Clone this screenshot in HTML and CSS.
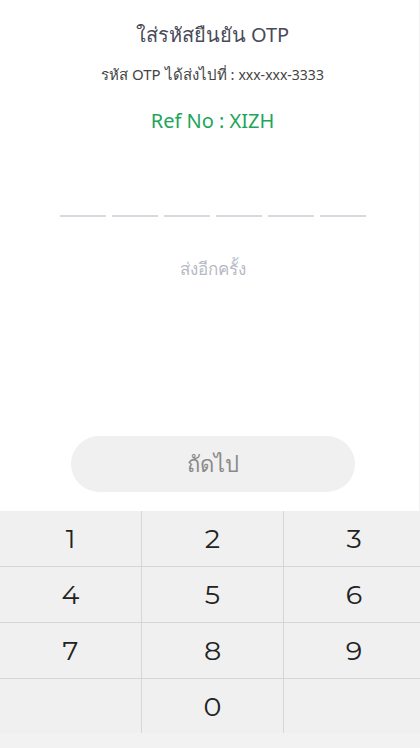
FILE: index.html
```html
<!doctype html>
<html>
<head>
<meta charset="utf-8">
<title>OTP</title>
<link rel="stylesheet" href="styles.css">
</head>
<body>
	<div class="page">
		<div class="content">
			<h1 class="title">ใส่รหัสยืนยัน OTP</h1>
			<p class="sent">รหัส OTP ได้ส่งไปที่ : <span class="phone">xxx-xxx-3333</span></p>
			<p class="ref">Ref No : XIZH</p>

			<div class="otp">
				<span class="otpDigit"></span>
				<span class="otpDigit"></span>
				<span class="otpDigit"></span>
				<span class="otpDigit"></span>
				<span class="otpDigit"></span>
				<span class="otpDigit"></span>
			</div>

			<p class="resend">ส่งอีกครั้ง</p>

			<div class="actions">
				<button class="btnNext">ถัดไป</button>
			</div>
		</div>

		<div class="keypad">
			<div class="key">1</div>
			<div class="key">2</div>
			<div class="key">3</div>
			<div class="key">4</div>
			<div class="key">5</div>
			<div class="key">6</div>
			<div class="key">7</div>
			<div class="key">8</div>
			<div class="key">9</div>
			<div class="key"></div>
			<div class="key">0</div>
			<div class="key"></div>
		</div>
		<div class="keypadFoot"></div>
	</div>
</body>
</html>
```

FILE: styles.css
```css
body {
	margin: 0;
	background: #fff;
	font-family: "Noto Sans", "Open Sans", sans-serif;
	color: #4a4a55;
}

.page {
	width: 420px;
	height: 748px;
	display: flex;
	flex-direction: column;
	overflow: hidden;
}

.content {
	flex: 1;
	display: flex;
	flex-direction: column;
	align-items: center;
	padding-left: 6px;
	border-right: 1px solid #f2f2f2;
}

.title {
	font-size: 20px;
	font-weight: normal;
	margin: 21px 0 0;
	line-height: 28px;
	color: #4a4a58;
}

.sent {
	font-size: 15px;
	margin: 14px 0 0;
	line-height: 22px;
	color: #444;
}

.phone {
	font-size: 14px;
}

.ref {
	font-size: 20px;
	margin: 21px 0 0;
	line-height: 27px;
	color: #1ea55a;
}

.otp {
	display: flex;
	gap: 6px;
	margin: 81px 0 0;
}

.otpDigit {
	width: 46px;
	height: 2px;
	background: #d8d9de;
}

.resend {
	font-size: 17px;
	margin: 40px 0 0;
	line-height: 24px;
	color: #b6bac6;
}

.actions {
	margin-top: 155px;
}

.btnNext {
	width: 284px;
	height: 56px;
	border: none;
	border-radius: 28px;
	background: #f0f0f0;
	color: #8a8a8a;
	font-family: "Noto Sans", "Open Sans", sans-serif;
	font-size: 22px;
	padding: 0;
}

.keypad {
	display: grid;
	grid-template-columns: 141px 142px 137px;
	grid-template-rows: 55px 56px 56px 55px;
	background: #f0f0f0;
}

.key {
	display: flex;
	align-items: center;
	justify-content: center;
	font-family: "Montserrat", "Lato", sans-serif;
	font-size: 27px;
	color: #222;
	border-top: 1px solid #d6d6d6;
	border-left: 1px solid #d6d6d6;
}

.key:nth-child(-n+3) {
	border-top: none;
}

.key:nth-child(3n+1) {
	border-left: none;
}

.key:nth-child(3n) {
	padding-left: 4px;
}

.keypadFoot {
	height: 15px;
	background: #f2f2f2;
}
```
